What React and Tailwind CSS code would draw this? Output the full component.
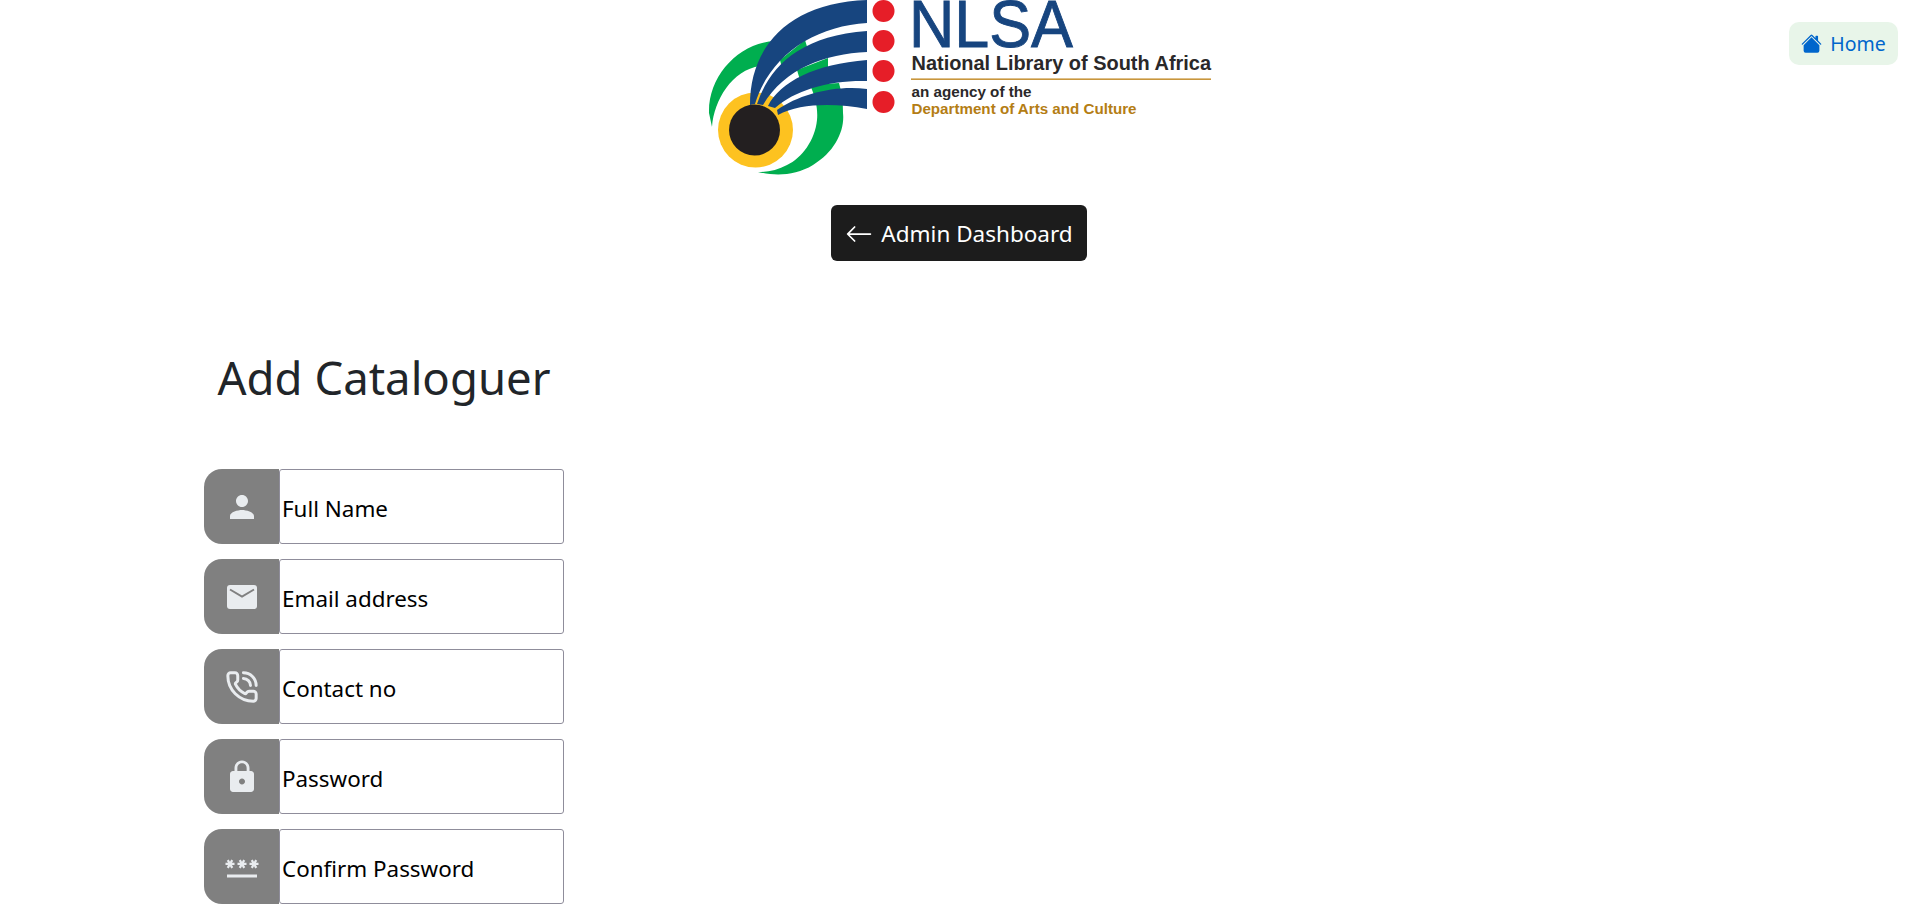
import React from 'react';
import { PhoneCall } from 'lucide-react';
import { BsArrowLeft, BsHouseFill } from 'react-icons/bs';
import { MdPerson, MdLock, MdPassword } from 'react-icons/md';

const MailIcon = () => (
  <svg viewBox="0 0 30 24" className="w-[30px] h-[24px]">
    <rect width="30" height="24" rx="3" fill="currentColor" />
    <path d="M3 4.5L15 11.5L27 4.5" fill="none" stroke="#808080" strokeWidth="2" />
  </svg>
);

const fields = [
  { name: 'Full Name', type: 'text', icon: <MdPerson size={36} /> },
  { name: 'Email address', type: 'email', icon: <MailIcon /> },
  { name: 'Contact no', type: 'tel', icon: <PhoneCall size={34} strokeWidth={2.1} /> },
  { name: 'Password', type: 'password', icon: <MdLock size={36} /> },
  { name: 'Confirm Password', type: 'password', icon: <MdPassword size={36} /> },
];

// viewBox uses the page's own x/y so the logo numbers line up with the screenshot
const Logo = () => (
  <svg viewBox="699 0 520 180" className="block w-[520px] h-[180px] mx-auto">
    <g fill="#00ae4f">
      <path d="M776 41C740 42 708 75 709 113L712 127C714 100 732 70 760 66Z" />
      <path d="M758 172C775 176 795 176 813 165C835 152 845 130 843 113C843 103 842 93 839 83L810 85C816 98 818 110 817 120C815 140 802 158 787 165C778 170 768 172 758 172Z" />
      <path d="M780 60L805 40L808 50L783 72Z" />
      <path d="M797 70L828 58L828 68L800 80Z" />
    </g>
    <circle cx="755.5" cy="130" r="37.5" fill="#fdc220" />
    <g fill="#17457f">
      <path d="M750 105C750 45 790 3 867 0V23C815 26 770 55 755 104Z" />
      <path d="M757 104C770 66 800 36 867 31V52C825 54 785 68 763 105Z" />
      <path d="M768 106C780 82 815 64 867 60V81C830 80 795 90 775 108Z" />
      <path d="M777 110C800 94 835 85 867 89V109C835 103 800 103 778 115Z" />
    </g>
    <circle cx="754.5" cy="130" r="25.5" fill="#231f20" />
    <g fill="#e61e28">
      <circle cx="883.5" cy="11" r="11" />
      <circle cx="883.5" cy="41" r="11" />
      <circle cx="883.5" cy="71" r="11" />
      <circle cx="883.5" cy="102" r="11" />
    </g>
    <g fontFamily="'Liberation Sans', Arial, sans-serif">
      <text x="909" y="47" fontSize="66" fill="#17457f" stroke="#17457f" strokeWidth="0.9" textLength="164" lengthAdjust="spacingAndGlyphs">NLSA</text>
      <text x="911.5" y="70" fontSize="19.5" fontWeight="700" fill="#2a2829" textLength="299.5" lengthAdjust="spacingAndGlyphs">National Library of South Africa</text>
      <rect x="911" y="78.4" width="300" height="1.6" fill="#c8963c" />
      <text x="911.5" y="97" fontSize="14" fontWeight="700" fill="#2a2829" textLength="120" lengthAdjust="spacingAndGlyphs">an agency of the</text>
      <text x="911.5" y="114" fontSize="14.5" fontWeight="700" fill="#b47d14" textLength="225" lengthAdjust="spacingAndGlyphs">Department of Arts and Culture</text>
    </g>
  </svg>
);

const App = () => {
  return (
    <div className="relative bg-white font-['Noto_Sans','Open_Sans',sans-serif]">
      <a href="#" className="absolute top-[22px] right-[20px] w-[109px] h-[43px] flex items-center justify-center gap-[8px] rounded-[10px] bg-[#e8f5e9] text-[#0066cc] text-[19.5px]">
        <BsHouseFill size={21} />
        <span>Home</span>
      </a>

      <Logo />

      {/* Back button */}
      <div className="flex justify-center mt-[25px]">
        <button className="w-[256px] h-[56px] pt-[2px] flex items-center justify-center gap-[8px] rounded-[6px] bg-[#1c1c1c] text-white text-[22.5px]">
          <BsArrowLeft size={28} />
          <span>Admin Dashboard</span>
        </button>
      </div>

      {/* Form */}
      <div className="pl-[204px] mt-[86px]">
        <h1 className="w-[360px] text-center text-[#212529] text-[45.5px] leading-[60px]">Add Cataloguer</h1>
        <form className="flex flex-col gap-[15px] mt-[62px]">
          {fields.map((field) => (
            <div key={field.name} className="flex w-[360px] h-[75px]">
              <div className="w-[75px] flex items-center justify-center rounded-l-[18px] bg-[#808080] text-[#e9ecef]">
                {field.icon}
              </div>
              <input
                type={field.type}
                placeholder={field.name}
                className="flex-1 min-w-0 px-[2px] pt-[5px] border border-[#8f8d9b] rounded-[3px] bg-white text-[22.4px] placeholder:text-black outline-none"
              />
            </div>
          ))}
        </form>
      </div>
    </div>
  );
};

export default App;
